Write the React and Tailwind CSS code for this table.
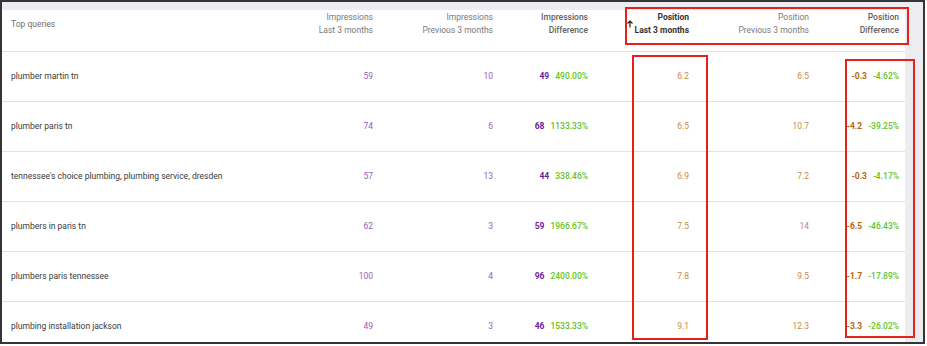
const ROWS = [
  { q: 'plumber martin tn', i1: '59', i2: '10', id: '49', ip: '490.00%', p1: '6.2', p2: '6.5', pd: '-0.3', pp: '-4.62%' },
  { q: 'plumber paris tn', i1: '74', i2: '6', id: '68', ip: '1133.33%', p1: '6.5', p2: '10.7', pd: '-4.2', pp: '-39.25%' },
  { q: "tennessee's choice plumbing, plumbing service, dresden", i1: '57', i2: '13', id: '44', ip: '338.46%', p1: '6.9', p2: '7.2', pd: '-0.3', pp: '-4.17%' },
  { q: 'plumbers in paris tn', i1: '62', i2: '3', id: '59', ip: '1966.67%', p1: '7.5', p2: '14', pd: '-6.5', pp: '-46.43%' },
  { q: 'plumbers paris tennessee', i1: '100', i2: '4', id: '96', ip: '2400.00%', p1: '7.8', p2: '9.5', pd: '-1.7', pp: '-17.89%' },
  { q: 'plumbing installation jackson', i1: '49', i2: '3', id: '46', ip: '1533.33%', p1: '9.1', p2: '12.3', pd: '-3.3', pp: '-26.02%' },
]

const GRID = 'grid grid-cols-[251px_120px_120px_95px_101px_120px_90px] pr-[6px]'

function Head({ top, bottom, className = '' }) {
  return (
    <div className={`flex flex-col items-end leading-[13px] ${className}`}>
      <span>{top}</span>
      <span>{bottom}</span>
    </div>
  )
}

export default function App() {
  return (
    <div className="w-[927px] h-[346px] bg-white" style={{ fontFamily: 'Roboto, "Liberation Sans", sans-serif' }}>
      <div className="relative w-[925px] h-[344px] border-2 border-[#353535] bg-[#ececf1] overflow-hidden text-[8.5px]">
        <div className="mt-[8px] w-[903px] h-[340px] bg-white">
          {/* header */}
          <div className={`${GRID} h-[42px] border-b border-[#e2e2e2] pt-[1px] text-[#7a7a7a]`}>
            <div className="pl-[9px] h-[26px] flex items-center text-[#6f6f6f]">Top queries</div>
            <Head top="Impressions" bottom="Last 3 months" />
            <Head top="Impressions" bottom="Previous 3 months" />
            <Head top="Impressions" bottom="Difference" className="text-[#5f5f5f] font-medium" />
            <div className="flex items-center justify-end gap-[2px] h-[26px]">
              <svg width="6" height="8" viewBox="0 0 6 8" className="mt-[-1px]">
                <path d="M3 7.5V1M0.5 3.5L3 1L5.5 3.5" fill="none" stroke="#222" strokeWidth="1.2" />
              </svg>
              <Head top="Position" bottom="Last 3 months" className="text-[#333] font-bold" />
            </div>
            <Head top="Position" bottom="Previous 3 months" />
            <Head top="Position" bottom="Difference" className="text-[#5f5f5f] font-medium" />
          </div>

          {ROWS.map(r => (
            <div key={r.q} className={`${GRID} h-[50px] border-b border-[#e2e2e2] items-center pb-[1px]`}>
              <div className="pl-[9px] text-[#3a3a3a]">{r.q}</div>
              <div className="text-right text-[#9a5cb8]">{r.i1}</div>
              <div className="text-right text-[#9a5cb8]">{r.i2}</div>
              <div className="flex justify-end gap-[6px]">
                <span className="font-bold text-[#6a1d9c]">{r.id}</span>
                <span className="font-medium text-[#62c41c]">{r.ip}</span>
              </div>
              <div className="text-right text-[#c98a45]">{r.p1}</div>
              <div className="text-right text-[#c98a45]">{r.p2}</div>
              <div className="flex justify-end gap-[6px]">
                <span className="font-bold text-[#b9650f]">{r.pd}</span>
                <span className="font-medium text-[#62c41c]">{r.pp}</span>
              </div>
            </div>
          ))}
        </div>

        {/* annotation boxes */}
        <div className="absolute left-[623px] top-[5px] w-[284px] h-[38px] border-2 border-[#e8201c]" />
        <div className="absolute left-[630px] top-[53px] w-[76px] h-[285px] border-2 border-[#e8201c]" />
        <div className="absolute left-[843px] top-[57px] w-[70px] h-[279px] border-2 border-[#e8201c]" />
      </div>
    </div>
  )
}
